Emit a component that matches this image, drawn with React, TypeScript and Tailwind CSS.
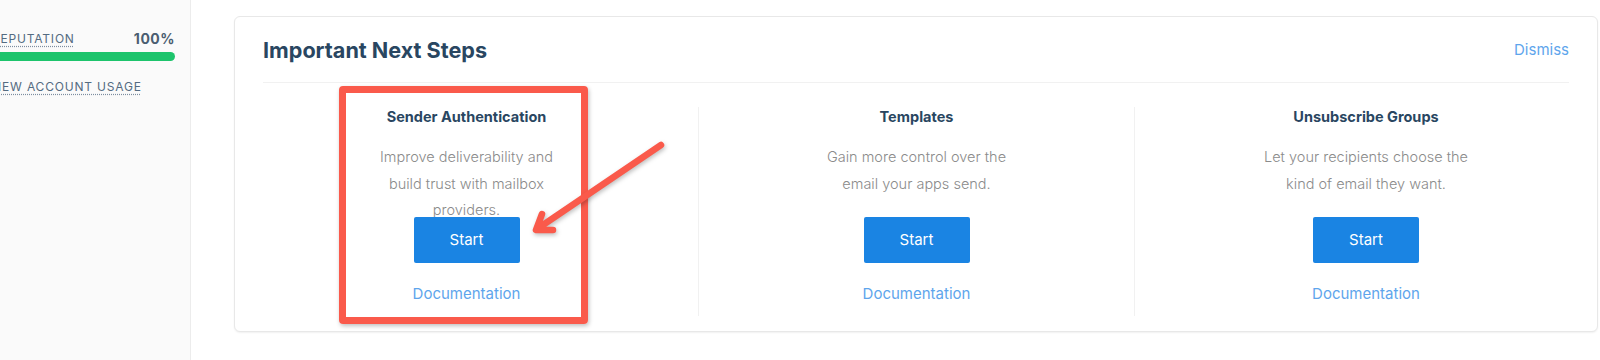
const steps = [
  {
    title: 'Sender Authentication',
    lines: ['Improve deliverability and', 'build trust with mailbox', 'providers.'],
  },
  {
    title: 'Templates',
    lines: ['Gain more control over the', 'email your apps send.'],
  },
  {
    title: 'Unsubscribe Groups',
    lines: ['Let your recipients choose the', 'kind of email they want.'],
  },
]

function Sidebar() {
  return (
    <aside className="w-[191px] shrink-0 overflow-hidden border-r border-[#ececec] bg-[#fafafa] text-[#546b81]">
      <div className="-ml-[8px] mr-[15px] mt-[31px] flex items-end justify-between">
        <span className="text-[12px] leading-[16px] tracking-[0.8px] underline decoration-dotted decoration-[#7d8ea0] underline-offset-[3px]">
          REPUTATION
        </span>
        <span className="text-[14px] font-bold leading-[16px] tracking-[0.5px] text-[#4a5d70]">
          100%
        </span>
      </div>
      <div className="mr-[15px] mt-[5px] h-[9px] rounded-r-full bg-[#1dc46c]" />
      <div className="-ml-[11px] mt-[18px] text-[12px] leading-[16px] tracking-[0.8px] underline decoration-dotted decoration-[#7d8ea0] underline-offset-[3px]">
        VIEW ACCOUNT USAGE
      </div>
    </aside>
  )
}

function StepColumn({ title, lines, divider }: { title: string; lines: string[]; divider: boolean }) {
  return (
    <div
      className={`flex flex-col items-center ${divider ? 'border-l border-[#f1f1f1]' : ''}`}
    >
      <h3 className="text-[14.5px] font-bold leading-[20px] text-[#294661]">{title}</h3>
      <p className="mt-[17px] h-[52px] text-center text-[14.5px] font-light leading-[26.5px] text-[#8b8b8b]">
        {lines.map((line) => (
          <span key={line} className="block">
            {line}
          </span>
        ))}
      </p>
      <button className="mt-[21px] h-[46px] w-[106px] rounded-[2px] bg-[#1a84e3] text-[15px] text-white">
        Start
      </button>
      <a className="mt-[21px] text-[15px] leading-[20px] text-[#5ea5ec]">Documentation</a>
    </div>
  )
}

export default function App() {
  return (
    <div
      className="relative flex h-[360px] w-[1600px] overflow-hidden bg-white"
      style={{ fontFamily: 'Inter, "Noto Sans", sans-serif' }}
    >
      <Sidebar />
      <main className="flex-1 pl-[43px] pt-[16px]">
        <section className="h-[316px] w-[1364px] rounded-[6px] border border-[#e8e8e8] bg-white shadow-[0_1px_2px_rgba(0,0,0,0.06)]">
          <div className="mx-[28px] flex items-center justify-between border-b border-[#f1f1f1] pb-[18px] pt-[19px]">
            <h2 className="text-[21.6px] font-bold leading-[28px] text-[#294661]">
              Important Next Steps
            </h2>
            <a className="text-[15px] text-[#5ea5ec]">Dismiss</a>
          </div>
          <div className="mt-[24px] grid h-[209px] grid-cols-[463px_436px_1fr]">
            {steps.map((step, i) => (
              <StepColumn key={step.title} {...step} divider={i > 0} />
            ))}
          </div>
        </section>
      </main>

      {/* annotation: highlight box + arrow */}
      <div className="absolute left-[339px] top-[86px] h-[238px] w-[249px] rounded-[4px] border-[7px] border-[#fa5a4b] shadow-[1px_2px_4px_rgba(0,0,0,0.25)]" />
      <svg
        className="pointer-events-none absolute left-0 top-0"
        width="1600"
        height="360"
        style={{ filter: 'drop-shadow(1px 2px 2px rgba(0,0,0,0.25))' }}
      >
        <path
          d="M661 145 L537 229 M542 214 L536 230 L553 230"
          fill="none"
          stroke="#fa5a4b"
          strokeWidth="6.5"
          strokeLinecap="round"
          strokeLinejoin="round"
        />
      </svg>
    </div>
  )
}
